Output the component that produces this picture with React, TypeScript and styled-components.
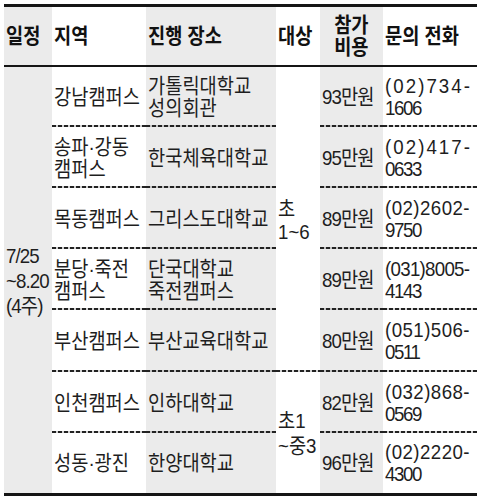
import React from "react";
import styled, { createGlobalStyle, css } from "styled-components";

const GlobalStyle = createGlobalStyle`
  html, body { margin: 0; padding: 0; background: #fff; }
  body {
    font-family: "Liberation Sans", "Noto Sans CJK KR", sans-serif;
    color: #1c1c1c;
  }
`;

const GRAY = "#ebebeb";
const DOTS =
  "repeating-linear-gradient(to right, #222 0 4px, rgba(0,0,0,0.18) 4px 6px)";

const Table = styled.div`
  margin: 4px 0 0 4px;
  width: 473px;
  border-top: 3px solid #151515;
  border-bottom: 3px solid #151515;
  display: grid;
  grid-template-columns: 48px 94px 130px 44px 63px 94px;
  grid-template-rows: 60px 60px 61px 61px 61px 62px 61px 60px;
`;

const Cell = styled.div<{
  $gray?: boolean;
  $dotted?: boolean;
  $center?: boolean;
  $head?: boolean;
  $span?: number;
}>`
  box-sizing: border-box;
  display: flex;
  align-items: center;
  justify-content: ${(p) => (p.$center ? "center" : "flex-start")};
  padding-left: ${(p) => (p.$center ? 0 : 2)}px;
  background-color: ${(p) => (p.$gray ? GRAY : "#fff")};
  ${(p) => p.$span && css`grid-row: span ${p.$span};`}
  ${(p) =>
    p.$dotted &&
    css`
      background-image: ${DOTS};
      background-size: 100% 2px;
      background-position: left bottom;
      background-repeat: no-repeat;
    `}
  ${(p) => p.$head && css`border-bottom: 2px solid #151515;`}
`;

const Text = styled.div<{ $bold?: boolean; $lh?: number; $center?: boolean }>`
  flex: none;
  font-family: "Liberation Sans", "Noto Sans CJK KR", sans-serif;
  font-size: 21px;
  line-height: ${(p) => p.$lh ?? 22}px;
  font-weight: ${(p) => (p.$bold ? 700 : 400)};
  color: ${(p) => (p.$bold ? "#111" : "#1e1e1e")};
  text-align: ${(p) => (p.$center ? "center" : "left")};
  white-space: nowrap;
  transform: scaleX(0.89);
  transform-origin: ${(p) => (p.$center ? "center" : "left")} center;
`;

const Line = styled.div<{ $ls?: number }>`
  letter-spacing: ${(p) => p.$ls ?? 0}px;
`;

const Lines = ({
  lines,
  ls,
  ...rest
}: {
  lines: string[];
  ls?: number;
  $bold?: boolean;
  $lh?: number;
  $center?: boolean;
}) => (
  <Text {...rest}>
    {lines.map((l, i) => (
      <Line key={i} $ls={ls}>
        {l}
      </Line>
    ))}
  </Text>
);

type Row = {
  region: string[];
  place: string[];
  fee: string;
  phone: [string, string];
  spread: number;
};

const rows: Row[] = [
  { region: ["강남캠퍼스"], place: ["가톨릭대학교", "성의회관"], fee: "93만원", phone: ["(02)734-", "1606"], spread: 2.3 },
  { region: ["송파·강동", "캠퍼스"], place: ["한국체육대학교"], fee: "95만원", phone: ["(02)417-", "0633"], spread: 2.3 },
  { region: ["목동캠퍼스"], place: ["그리스도대학교"], fee: "89만원", phone: ["(02)2602-", "9750"], spread: 0.5 },
  { region: ["분당·죽전", "캠퍼스"], place: ["단국대학교", "죽전캠퍼스"], fee: "89만원", phone: ["(031)8005-", "4143"], spread: -0.8 },
  { region: ["부산캠퍼스"], place: ["부산교육대학교"], fee: "80만원", phone: ["(051)506-", "0511"], spread: 0.5 },
  { region: ["인천캠퍼스"], place: ["인하대학교"], fee: "82만원", phone: ["(032)868-", "0569"], spread: 0.5 },
  { region: ["성동·광진"], place: ["한양대학교"], fee: "96만원", phone: ["(02)2220-", "4300"], spread: 0.5 },
];

const Phone = ({ phone, spread }: { phone: [string, string]; spread: number }) => (
  <Text>
    <Line $ls={spread}>{phone[0]}</Line>
    <Line $ls={-1.6}>{phone[1]}</Line>
  </Text>
);

export default function App() {
  return (
    <>
      <GlobalStyle />
      <Table>
        <Cell $head $gray>
          <Lines $bold lines={["일정"]} />
        </Cell>
        <Cell $head>
          <Lines $bold lines={["지역"]} />
        </Cell>
        <Cell $head $gray>
          <Lines $bold lines={["진행 장소"]} />
        </Cell>
        <Cell $head>
          <Lines $bold lines={["대상"]} />
        </Cell>
        <Cell $head $gray $center>
          <Lines $bold $center lines={["참가", "비용"]} />
        </Cell>
        <Cell $head>
          <Lines $bold lines={["문의 전화"]} />
        </Cell>

        {rows.map((r, i) => {
          const dotted = i < rows.length - 1;
          return (
            <React.Fragment key={i}>
              {i === 0 && (
                <Cell $gray $span={7}>
                  <Lines $lh={25} ls={-1} lines={["7/25", "~8.20", "(4주)"]} />
                </Cell>
              )}
              <Cell $dotted={dotted}>
                <Lines lines={r.region} />
              </Cell>
              <Cell $gray $dotted={dotted}>
                <Lines lines={r.place} />
              </Cell>
              {i === 0 && (
                <Cell $dotted $span={5}>
                  <Lines $lh={23} lines={["초", "1~6"]} />
                </Cell>
              )}
              {i === 5 && (
                <Cell $span={2}>
                  <Lines $lh={25} lines={["초1", "~중3"]} />
                </Cell>
              )}
              <Cell $gray $dotted={dotted}>
                <Lines ls={-1} lines={[r.fee]} />
              </Cell>
              <Cell $dotted={dotted}>
                <Phone phone={r.phone} spread={r.spread} />
              </Cell>
            </React.Fragment>
          );
        })}
      </Table>
    </>
  );
}
